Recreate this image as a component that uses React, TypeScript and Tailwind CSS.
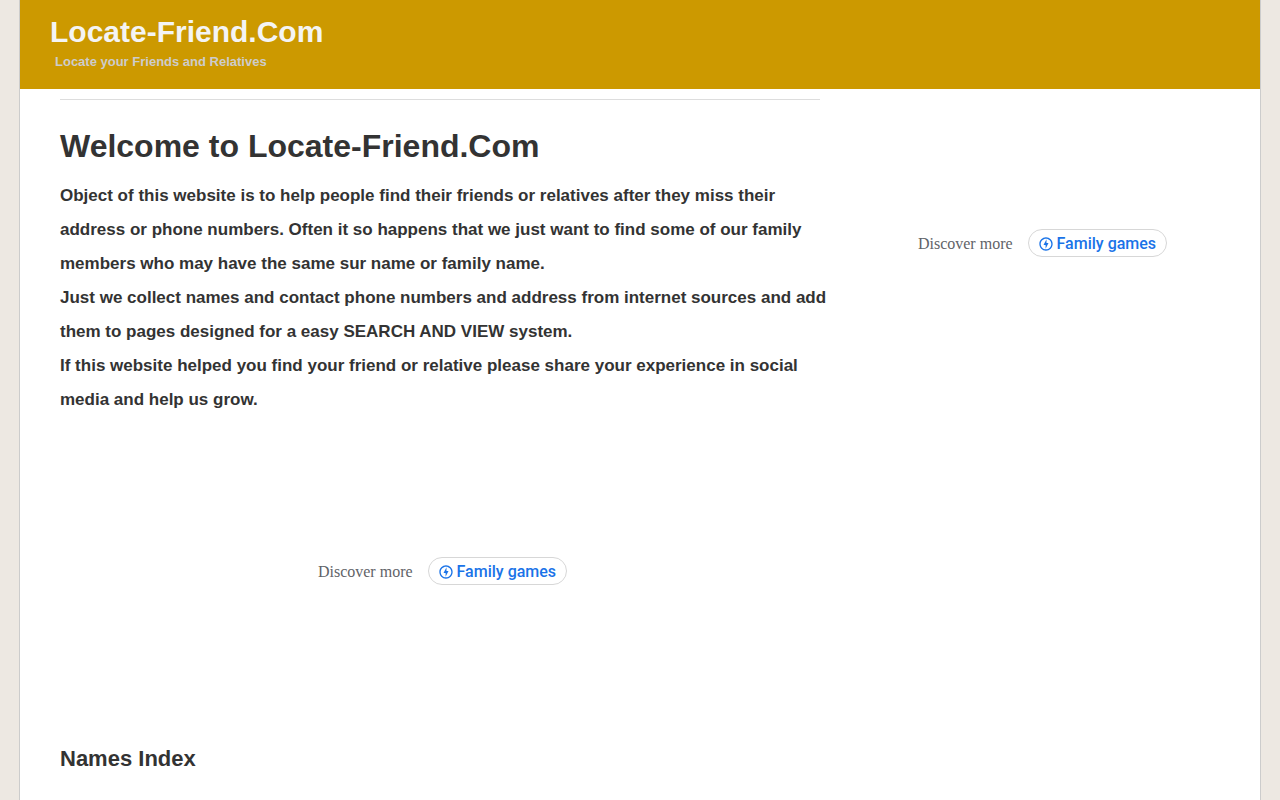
const paragraphs = [
  "Object of this website is to help people find their friends or relatives after they miss their address or phone numbers. Often it so happens that we just want to find some of our family members who may have the same sur name or family name.",
  "Just we collect names and contact phone numbers and address from internet sources and add them to pages designed for a easy SEARCH AND VIEW system.",
  "If this website helped you find your friend or relative please share your experience in social media and help us grow.",
];

function BoltIcon() {
  return (
    <svg aria-hidden="true" className="h-4 w-4 shrink-0" fill="currentColor" viewBox="0 0 24 24">
      <path d="M12 2.02c-5.51 0-9.98 4.47-9.98 9.98s4.47 9.98 9.98 9.98 9.98-4.47 9.98-9.98S17.51 2.02 12 2.02zm0 17.96c-4.4 0-7.98-3.58-7.98-7.98S7.6 4.02 12 4.02 19.98 7.6 19.98 12 16.4 19.98 12 19.98zM12.75 5l-4.5 8.5h3.14V19l4.36-8.5h-3V5z" />
    </svg>
  );
}

function DiscoverMore() {
  return (
    <div className="flex items-center gap-[15px] pl-[5px]">
      <span className="pt-0.5 font-['Liberation_Serif',serif] text-base text-[#5f6368]">
        Discover more
      </span>
      <a
        className="flex h-7 items-center gap-[3px] rounded-full border border-[#d7d7d7] bg-white pt-0.5 pr-[10px] pl-[9px] font-[Roboto,sans-serif] text-base font-medium text-[#1a73e8]"
        href="#family-games"
      >
        <BoltIcon />
        Family games
      </a>
    </div>
  );
}

export default function App() {
  return (
    <div className="min-h-screen bg-[#ede8e2] px-5 font-['Liberation_Sans',Arial,sans-serif] text-[#333]">
      <div className="min-h-screen bg-white ring-1 ring-[#ccc]">
        <header className="bg-[#cc9900] px-[30px] pt-3 pb-[18px]">
          <h1 className="text-[30px] leading-10 font-bold text-[#f4f4f4]">
            <a href="#home">Locate-Friend.Com</a>
          </h1>
          <p className="px-[5px] text-[13px] leading-[19px] font-bold text-[#ccc]">
            Locate your Friends and Relatives
          </p>
        </header>

        <div className="flex gap-10 px-10 pt-[10px]">
          <main className="w-[760px] shrink-0 border-t border-[#ddd]">
            <h2 className="pt-6 text-[32px] leading-[44px] font-bold">Welcome to Locate-Friend.Com</h2>
            <div className="mt-[11px] -mr-3 text-[17px] leading-[34px] font-bold">
              {paragraphs.map((text) => (
                <p key={text}>{text}</p>
              ))}
            </div>
            <div className="flex h-[308px] items-center justify-center">
              <DiscoverMore />
            </div>
            <h2 className="pt-[18px] pb-10 text-[22px] leading-8 font-bold">Names Index</h2>
          </main>
          <aside className="flex h-[288px] flex-1 items-center justify-center">
            <DiscoverMore />
          </aside>
        </div>
      </div>
    </div>
  );
}
